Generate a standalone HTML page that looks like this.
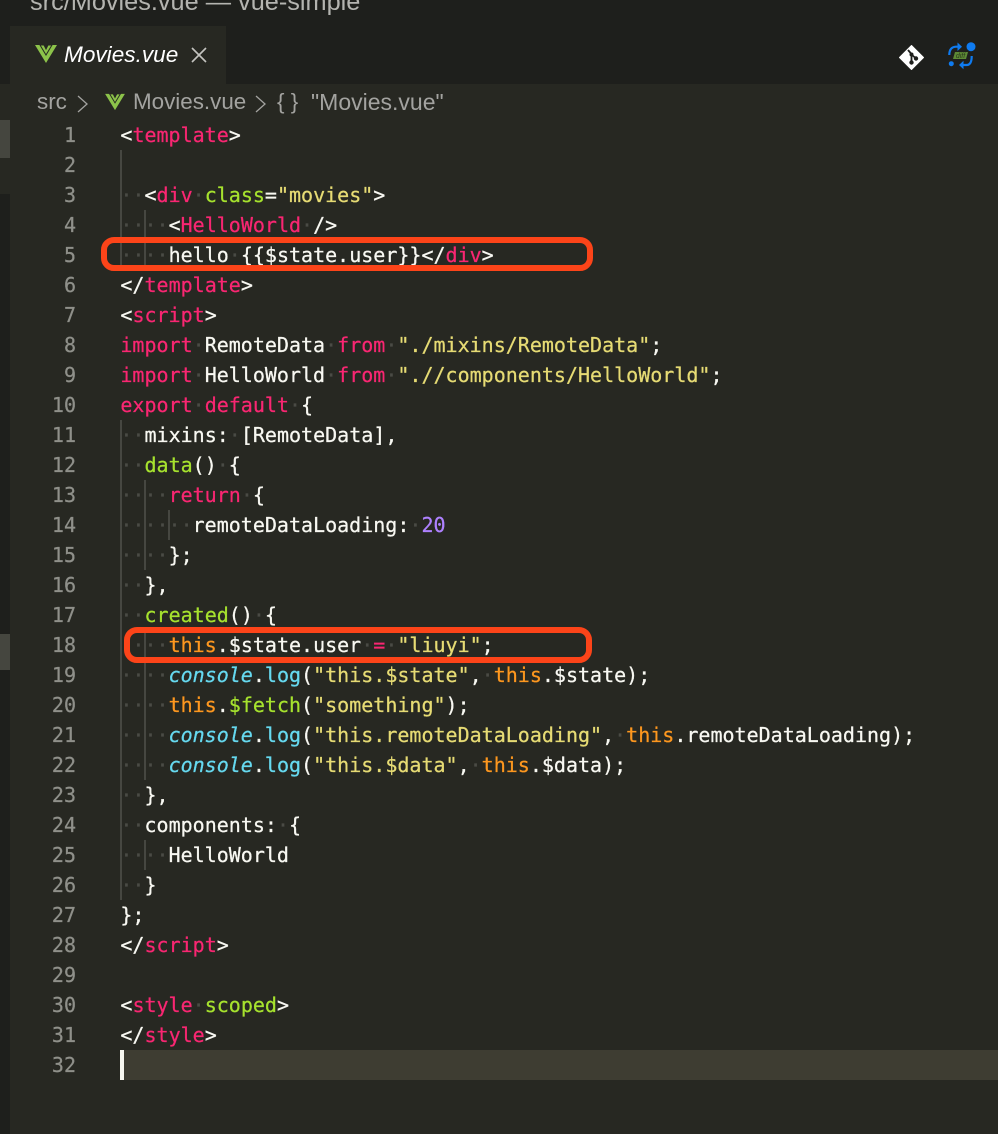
<!DOCTYPE html>
<html><head><meta charset="utf-8"><style>
html,body{margin:0;padding:0;background:#272822}
body{position:relative;width:998px;height:1134px;overflow:hidden;background:#272822}
.a{position:absolute}
.l,.n{position:absolute;height:30px;line-height:30px;font-family:"DejaVu Sans Mono","Liberation Mono",monospace;font-size:20px;white-space:pre;-webkit-text-stroke:.25px currentColor}
.l{left:120.4px;color:#f8f8f2}
.n{left:30px;width:46px;text-align:right;color:#8f908a}
.k{color:#f92672}.g{color:#a6e22e}.y{color:#e6db74}.o{color:#fd971f}.c{color:#66d9ef;font-style:italic}.p{color:#ae81ff}.d{color:#4a4b45}
.gd{position:absolute;width:2px;background:#464741}
.s{font-family:"Liberation Sans",sans-serif}
.b{font-size:22.4px;line-height:28px;color:#a3a3a0;white-space:pre}
.r{position:absolute;border:6px solid #fc4419;border-radius:13px;box-sizing:border-box}
</style></head><body>
<div class="a" style="left:0;top:0;width:998px;height:84px;background:#1e1f1c"></div>
<div class="a" style="left:0;top:84px;width:10px;height:1050px;background:#1e1f1c"></div>
<div class="a" style="left:0;top:84px;width:10px;height:110px;background:#272822"></div>
<div class="a" style="left:0;top:120px;width:10px;height:38px;background:#45463f"></div>
<div class="a" style="left:0;top:634px;width:10px;height:36px;background:#45463f"></div>
<div class="a s" style="left:30px;top:-12px;font-size:25.3px;line-height:28px;color:#b4b4b0;white-space:pre">src/Movies.vue — vue-simple</div>
<div class="a" style="left:10px;top:26px;width:216px;height:58px;background:#272822"></div>
<svg class="a" style="left:35px;top:44px" width="22" height="20" viewBox="0 0 22 20"><path d="M0 1H5L11 11L17 1H22L11 19Z" fill="#8cc34a"/><path d="M5 1H9L11 5L13 1H17L11 11Z" fill="#8cc34a" stroke="#272822" stroke-width="1"/></svg>
<div class="a s" style="left:64px;top:41px;font-size:22.6px;line-height:28px;font-style:italic;color:#fff">Movies.vue</div>
<svg class="a" style="left:191px;top:47px" width="16" height="16" viewBox="0 0 16 16"><path d="M1 1L15 15M15 1L1 15" stroke="#c4c4c0" stroke-width="1.6" fill="none"/></svg>
<svg class="a" style="left:899px;top:45px" width="25" height="25" viewBox="0 0 25 25"><path d="M12.5 0.5L24.5 12.5L12.5 24.5L0.5 12.5Z" fill="#fff" stroke="#fff" stroke-linejoin="round" stroke-width="1"/><path d="M9 5L12.5 9V17M12.5 9.5L17 13.5" stroke="#1e1f1c" stroke-width="1.8" fill="none"/><circle cx="12.5" cy="9.5" r="2" fill="#1e1f1c"/><circle cx="12.5" cy="17.5" r="2.2" fill="#1e1f1c"/><circle cx="17" cy="13.5" r="2.2" fill="#1e1f1c"/></svg>
<svg class="a" style="left:947px;top:42px" width="30" height="30" viewBox="0 0 30 30"><circle cx="24" cy="4.700" r="4.500" fill="#0f7bf0"/><circle cx="4.300" cy="21.700" r="2.500" fill="#0f7bf0"/><path d="M2.300 13Q2.300 5 9 4.700H11" stroke="#0f7bf0" stroke-width="2.200" fill="none"/><path d="M10.500 0.500L15 4.700L10.500 9Z" fill="#0f7bf0"/><path d="M24.700 14Q24.700 23 19.700 23H16" stroke="#0f7bf0" stroke-width="2.200" fill="none"/><path d="M16.500 18.700L12 23L16.500 27.300Z" fill="#0f7bf0"/><path d="M6 17L8 10H21L19 17Z" fill="#5d8a35"/><text x="13.500" y="16" text-anchor="middle" font-family="Liberation Sans,sans-serif" font-size="7" font-style="italic" fill="#2c3a1e">diff</text></svg>
<div class="a s b" style="left:37px;top:88px">src</div>
<svg class="a" style="left:77px;top:95px" width="11" height="18" viewBox="0 0 11 18"><path d="M1 1L10 9L1 17" stroke="#a3a3a0" stroke-width="1.300" fill="none"/></svg>
<svg class="a" style="left:105px;top:93px" width="20" height="18" viewBox="0 0 22 20"><path d="M0 1H5L11 11L17 1H22L11 19Z" fill="#8cc34a"/><path d="M5 1H9L11 5L13 1H17L11 11Z" fill="#8cc34a" stroke="#272822" stroke-width="1"/></svg>
<div class="a s b" style="left:133px;top:88px">Movies.vue</div>
<svg class="a" style="left:255px;top:95px" width="11" height="18" viewBox="0 0 11 18"><path d="M1 1L10 9L1 17" stroke="#a3a3a0" stroke-width="1.300" fill="none"/></svg>
<div class="a s b" style="left:277px;top:88px">{ }</div>
<div class="a s b" style="left:311px;top:88px;font-size:23px">"Movies.vue"</div>

<div class="a" style="left:120px;top:1050px;width:878px;height:30px;background:#3e3d32"></div>
<div class="a" style="left:120px;top:1050px;width:4px;height:30px;background:#f8f8f0"></div>

<div class="gd" style="left:120px;top:150px;height:120px"></div>
<div class="gd" style="left:144px;top:210px;height:60px"></div>
<div class="gd" style="left:120px;top:420px;height:480px"></div>
<div class="gd" style="left:144px;top:480px;height:90px"></div>
<div class="gd" style="left:168px;top:510px;height:30px"></div>
<div class="gd" style="left:144px;top:630px;height:150px"></div>
<div class="gd" style="left:144px;top:840px;height:30px"></div>

<div class="n" style="top:120px">1</div><div class="l" style="top:120px">&lt;<span class="k">template</span>&gt;</div>
<div class="n" style="top:150px">2</div>
<div class="n" style="top:180px">3</div><div class="l" style="top:180px"><span class="d">··</span>&lt;<span class="k">div</span><span class="d">·</span><span class="g">class</span>=<span class="y">"movies"</span>&gt;</div>
<div class="n" style="top:210px">4</div><div class="l" style="top:210px"><span class="d">····</span>&lt;<span class="k">HelloWorld</span><span class="d">·</span>/&gt;</div>
<div class="n" style="top:240px">5</div><div class="l" style="top:240px"><span class="d">····</span>hello<span class="d">·</span>{{$state.user}}&lt;/<span class="k">div</span>&gt;</div>
<div class="n" style="top:270px">6</div><div class="l" style="top:270px">&lt;/<span class="k">template</span>&gt;</div>
<div class="n" style="top:300px">7</div><div class="l" style="top:300px">&lt;<span class="k">script</span>&gt;</div>
<div class="n" style="top:330px">8</div><div class="l" style="top:330px"><span class="k">import</span><span class="d">·</span>RemoteData<span class="d">·</span><span class="k">from</span><span class="d">·</span><span class="y">"./mixins/RemoteData"</span>;</div>
<div class="n" style="top:360px">9</div><div class="l" style="top:360px"><span class="k">import</span><span class="d">·</span>HelloWorld<span class="d">·</span><span class="k">from</span><span class="d">·</span><span class="y">".//components/HelloWorld"</span>;</div>
<div class="n" style="top:390px">10</div><div class="l" style="top:390px"><span class="k">export</span><span class="d">·</span><span class="k">default</span><span class="d">·</span>{</div>
<div class="n" style="top:420px">11</div><div class="l" style="top:420px"><span class="d">··</span>mixins:<span class="d">·</span>[RemoteData],</div>
<div class="n" style="top:450px">12</div><div class="l" style="top:450px"><span class="d">··</span><span class="g">data</span>()<span class="d">·</span>{</div>
<div class="n" style="top:480px">13</div><div class="l" style="top:480px"><span class="d">····</span><span class="k">return</span><span class="d">·</span>{</div>
<div class="n" style="top:510px">14</div><div class="l" style="top:510px"><span class="d">······</span>remoteDataLoading:<span class="d">·</span><span class="p">20</span></div>
<div class="n" style="top:540px">15</div><div class="l" style="top:540px"><span class="d">····</span>};</div>
<div class="n" style="top:570px">16</div><div class="l" style="top:570px"><span class="d">··</span>},</div>
<div class="n" style="top:600px">17</div><div class="l" style="top:600px"><span class="d">··</span><span class="g">created</span>()<span class="d">·</span>{</div>
<div class="n" style="top:630px">18</div><div class="l" style="top:630px"><span class="d">····</span><span class="o">this</span>.$state.user<span class="d">·</span><span class="k">=</span><span class="d">·</span><span class="y">"liuyi"</span>;</div>
<div class="n" style="top:660px">19</div><div class="l" style="top:660px"><span class="d">····</span><span class="c">console</span>.<span class="c" style="font-style:normal">log</span>(<span class="y">"this.$state"</span>,<span class="d">·</span><span class="o">this</span>.$state);</div>
<div class="n" style="top:690px">20</div><div class="l" style="top:690px"><span class="d">····</span><span class="o">this</span>.<span class="g">$fetch</span>(<span class="y">"something"</span>);</div>
<div class="n" style="top:720px">21</div><div class="l" style="top:720px"><span class="d">····</span><span class="c">console</span>.<span class="c" style="font-style:normal">log</span>(<span class="y">"this.remoteDataLoading"</span>,<span class="d">·</span><span class="o">this</span>.remoteDataLoading);</div>
<div class="n" style="top:750px">22</div><div class="l" style="top:750px"><span class="d">····</span><span class="c">console</span>.<span class="c" style="font-style:normal">log</span>(<span class="y">"this.$data"</span>,<span class="d">·</span><span class="o">this</span>.$data);</div>
<div class="n" style="top:780px">23</div><div class="l" style="top:780px"><span class="d">··</span>},</div>
<div class="n" style="top:810px">24</div><div class="l" style="top:810px"><span class="d">··</span>components:<span class="d">·</span>{</div>
<div class="n" style="top:840px">25</div><div class="l" style="top:840px"><span class="d">····</span>HelloWorld</div>
<div class="n" style="top:870px">26</div><div class="l" style="top:870px"><span class="d">··</span>}</div>
<div class="n" style="top:900px">27</div><div class="l" style="top:900px">};</div>
<div class="n" style="top:930px">28</div><div class="l" style="top:930px">&lt;/<span class="k">script</span>&gt;</div>
<div class="n" style="top:960px">29</div>
<div class="n" style="top:990px">30</div><div class="l" style="top:990px">&lt;<span class="k">style</span><span class="d">·</span><span class="g">scoped</span>&gt;</div>
<div class="n" style="top:1020px">31</div><div class="l" style="top:1020px">&lt;/<span class="k">style</span>&gt;</div>
<div class="n" style="top:1050px">32</div>

<div class="r" style="left:101px;top:237px;width:492px;height:34px"></div>
<div class="r" style="left:124px;top:627px;width:468px;height:36px"></div>
</body></html>
